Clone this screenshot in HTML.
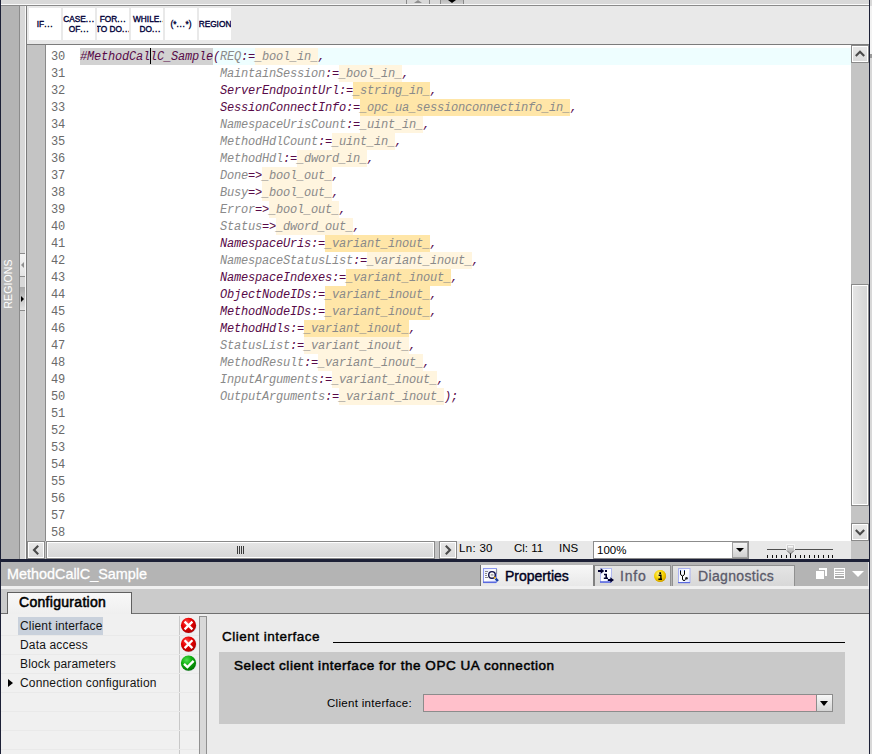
<!DOCTYPE html>
<html><head><meta charset="utf-8">
<style>
*{margin:0;padding:0;box-sizing:border-box}
html,body{width:872px;height:754px;overflow:hidden;background:#e8e8e8;font-family:"Liberation Sans",sans-serif}
.a{position:absolute}
/* code */
.ln,.num{position:absolute;height:17px;line-height:19px;font-family:"Liberation Mono",monospace;font-size:12px;letter-spacing:-0.2px;white-space:pre}
.ln>span{position:relative}
.num{left:51px;color:#6a6a6a}
.ln{left:80px;font-style:italic}
.p{color:#580a48}
.g{color:#8a8a8a}
.hs,.hf,.sel{display:inline-block;height:17px;vertical-align:top}
.hs{background:#ffe6a8;color:#8a8a8a}
.hf{background:#fff5df;color:#8a8a8a}
.sel{background:#d2d2d2;color:#580a48}
.tb b{font-weight:normal;letter-spacing:0.7px}
.btn{position:absolute;border:1px solid #8a8a8a;box-shadow:inset 0 0 0 1px #fff;background:linear-gradient(#e8e8e8,#dadada)}
.tb{position:absolute;top:8px;width:32px;height:32px;background:#fff;font-size:8.3px;color:#000038;-webkit-text-stroke:0.35px #000038;overflow:hidden;text-align:center;display:flex;align-items:center;justify-content:center;line-height:10px;letter-spacing:0px;white-space:nowrap}
.row{position:absolute;left:1px;width:178px;height:19px;border-bottom:1px solid #f8f8f8}
.li{position:absolute;left:20px;font-size:12px;color:#141414;line-height:14px;letter-spacing:0.16px}
</style></head><body>
<!-- left dark edge -->
<div class="a" style="left:0;top:0;width:1px;height:754px;background:#1c2036"></div>
<!-- top strip -->
<div class="a" style="left:1px;top:0;width:871px;height:4px;background:#d9d9d9"></div>
<div class="a" style="left:1px;top:4px;width:871px;height:1px;background:#fafafa"></div>
<div class="a" style="left:1px;top:5px;width:871px;height:1px;background:#8a8a8a"></div>
<div class="a" style="left:406px;top:0;width:1px;height:4px;background:#8a8a8a"></div>
<div class="a" style="left:429px;top:0;width:1px;height:4px;background:#8a8a8a"></div>
<div class="a" style="left:440px;top:0;width:1px;height:4px;background:#8a8a8a"></div>
<div class="a" style="left:463px;top:0;width:1px;height:4px;background:#8a8a8a"></div>
<div class="a" style="left:441px;top:0;width:22px;height:4px;background:linear-gradient(#bcbcbc,#d0d0d0)"></div>
<div class="a" style="left:414px;top:0;width:0;height:0;border-left:4px solid transparent;border-right:4px solid transparent;border-bottom:3px solid #909090"></div>
<div class="a" style="left:448px;top:0;width:0;height:0;border-left:4px solid transparent;border-right:4px solid transparent;border-top:3px solid #000"></div>

<!-- left sidebar -->
<div class="a" style="left:1px;top:6px;width:18px;height:553px;background:#b4b4b4"></div>
<div class="a" style="left:19px;top:6px;width:1px;height:553px;background:#8c8c8c"></div>
<div class="a" style="left:20px;top:6px;width:5px;height:553px;background:#d8d8d8"></div>
<div class="a" style="left:25px;top:6px;width:1px;height:553px;background:#f8f8f8"></div>
<div class="a" style="left:26px;top:6px;width:1px;height:553px;background:#7c7c7c"></div>
<div class="a" style="left:-18px;top:277px;width:52px;height:14px;transform:rotate(-90deg);color:#fff;font-size:10.5px;line-height:14px;text-align:center;letter-spacing:0.1px">REGIONS</div>
<!-- strip segments -->
<div class="a" style="left:20px;top:253px;width:5px;height:1px;background:#8c8c8c"></div>
<div class="a" style="left:20px;top:254px;width:5px;height:22px;background:linear-gradient(#f4f4f4,#e4e4e4)"></div>
<div class="a" style="left:21px;top:262px;width:0;height:0;border-top:3px solid transparent;border-bottom:3px solid transparent;border-right:3px solid #909090"></div>
<div class="a" style="left:20px;top:276px;width:5px;height:1px;background:#8c8c8c"></div>
<div class="a" style="left:20px;top:287px;width:5px;height:23px;background:linear-gradient(#a8a8a8,#e4e4e4)"></div>
<div class="a" style="left:21px;top:296px;width:0;height:0;border-top:3.5px solid transparent;border-bottom:3.5px solid transparent;border-left:3px solid #000"></div>
<div class="a" style="left:20px;top:310px;width:5px;height:1px;background:#8c8c8c"></div>

<!-- toolbar -->
<div class="a" style="left:27px;top:6px;width:842px;height:38px;background:#e9e9e9"></div>
<div class="a" style="left:27px;top:44px;width:842px;height:1px;background:#7c7c7c"></div>
<div class="tb" style="left:29px"><div>IF<b>...</b></div></div>
<div class="tb" style="left:63px"><div>CASE<b>...</b><br>OF<b>...</b></div></div>
<div class="tb" style="left:97px"><div>FOR<b>...</b><br>TO DO<b>..</b>.</div></div>
<div class="tb" style="left:131px;justify-content:flex-start;padding-left:2px"><div>WHILE<b>..</b><br>&nbsp;DO<b>...</b></div></div>
<div class="tb" style="left:165px"><div>(*<b>...</b>*)</div></div>
<div class="tb" style="left:199px"><div>REGION</div></div>

<!-- gutter & editor -->
<div class="a" style="left:27px;top:45px;width:18px;height:496px;background:#c4c4c4"></div>
<div class="a" style="left:45px;top:45px;width:1px;height:496px;background:#8a8a8a"></div>
<div class="a" style="left:46px;top:45px;width:805px;height:496px;background:#fff"></div>
<div class="a" style="left:213px;top:48px;width:638px;height:17px;background:#eefeff"></div>
<div class="num" style="top:48px">30</div>
<div class="num" style="top:65px">31</div>
<div class="num" style="top:82px">32</div>
<div class="num" style="top:99px">33</div>
<div class="num" style="top:116px">34</div>
<div class="num" style="top:133px">35</div>
<div class="num" style="top:150px">36</div>
<div class="num" style="top:167px">37</div>
<div class="num" style="top:184px">38</div>
<div class="num" style="top:201px">39</div>
<div class="num" style="top:218px">40</div>
<div class="num" style="top:235px">41</div>
<div class="num" style="top:252px">42</div>
<div class="num" style="top:269px">43</div>
<div class="num" style="top:286px">44</div>
<div class="num" style="top:303px">45</div>
<div class="num" style="top:320px">46</div>
<div class="num" style="top:337px">47</div>
<div class="num" style="top:354px">48</div>
<div class="num" style="top:371px">49</div>
<div class="num" style="top:388px">50</div>
<div class="num" style="top:405px">51</div>
<div class="num" style="top:422px">52</div>
<div class="num" style="top:439px">53</div>
<div class="num" style="top:456px">54</div>
<div class="num" style="top:473px">55</div>
<div class="num" style="top:490px">56</div>
<div class="num" style="top:507px">57</div>
<div class="num" style="top:524px">58</div>
<div class="ln" style="top:48px"><span class="sel">#MethodCallC_Sample</span><span class="p">(</span><span class="g">REQ</span><span class="p">:=</span><span class="hf">_bool_in_</span><span class="p">,</span></div>
<div class="ln" style="top:65px">                    <span class="g">MaintainSession</span><span class="p">:=</span><span class="hf">_bool_in_</span><span class="p">,</span></div>
<div class="ln" style="top:82px">                    <span class="p">ServerEndpointUrl</span><span class="p">:=</span><span class="hs">_string_in_</span><span class="p">,</span></div>
<div class="ln" style="top:99px">                    <span class="p">SessionConnectInfo</span><span class="p">:=</span><span class="hs">_opc_ua_sessionconnectinfo_in_</span><span class="p">,</span></div>
<div class="ln" style="top:116px">                    <span class="g">NamespaceUrisCount</span><span class="p">:=</span><span class="hf">_uint_in_</span><span class="p">,</span></div>
<div class="ln" style="top:133px">                    <span class="g">MethodHdlCount</span><span class="p">:=</span><span class="hf">_uint_in_</span><span class="p">,</span></div>
<div class="ln" style="top:150px">                    <span class="g">MethodHdl</span><span class="p">:=</span><span class="hf">_dword_in_</span><span class="p">,</span></div>
<div class="ln" style="top:167px">                    <span class="g">Done</span><span class="p">=></span><span class="hf">_bool_out_</span><span class="p">,</span></div>
<div class="ln" style="top:184px">                    <span class="g">Busy</span><span class="p">=></span><span class="hf">_bool_out_</span><span class="p">,</span></div>
<div class="ln" style="top:201px">                    <span class="g">Error</span><span class="p">=></span><span class="hf">_bool_out_</span><span class="p">,</span></div>
<div class="ln" style="top:218px">                    <span class="g">Status</span><span class="p">=></span><span class="hf">_dword_out_</span><span class="p">,</span></div>
<div class="ln" style="top:235px">                    <span class="p">NamespaceUris</span><span class="p">:=</span><span class="hs">_variant_inout_</span><span class="p">,</span></div>
<div class="ln" style="top:252px">                    <span class="g">NamespaceStatusList</span><span class="p">:=</span><span class="hf">_variant_inout_</span><span class="p">,</span></div>
<div class="ln" style="top:269px">                    <span class="p">NamespaceIndexes</span><span class="p">:=</span><span class="hs">_variant_inout_</span><span class="p">,</span></div>
<div class="ln" style="top:286px">                    <span class="p">ObjectNodeIDs</span><span class="p">:=</span><span class="hs">_variant_inout_</span><span class="p">,</span></div>
<div class="ln" style="top:303px">                    <span class="p">MethodNodeIDs</span><span class="p">:=</span><span class="hs">_variant_inout_</span><span class="p">,</span></div>
<div class="ln" style="top:320px">                    <span class="p">MethodHdls</span><span class="p">:=</span><span class="hs">_variant_inout_</span><span class="p">,</span></div>
<div class="ln" style="top:337px">                    <span class="g">StatusList</span><span class="p">:=</span><span class="hf">_variant_inout_</span><span class="p">,</span></div>
<div class="ln" style="top:354px">                    <span class="g">MethodResult</span><span class="p">:=</span><span class="hf">_variant_inout_</span><span class="p">,</span></div>
<div class="ln" style="top:371px">                    <span class="g">InputArguments</span><span class="p">:=</span><span class="hf">_variant_inout_</span><span class="p">,</span></div>
<div class="ln" style="top:388px">                    <span class="g">OutputArguments</span><span class="p">:=</span><span class="hf">_variant_inout_</span><span class="p">);</span></div>
<div class="a" style="left:150px;top:48px;width:1px;height:16px;background:#000"></div>

<!-- vertical scrollbar -->
<div class="a" style="left:851px;top:45px;width:18px;height:514px;background:#c4c4c4"></div>
<div class="btn" style="left:851px;top:45px;width:18px;height:18px"></div>
<svg class="a" style="left:851px;top:45px" width="18" height="18"><path d="M4.8 11 L9 6.8 L13.2 11" fill="none" stroke="#4a4a4a" stroke-width="2.1"/></svg>
<div class="btn" style="left:851px;top:284px;width:18px;height:222px;background:linear-gradient(90deg,#e6e6e6,#d4d4d4)"></div>
<div class="btn" style="left:851px;top:523px;width:18px;height:18px"></div>
<svg class="a" style="left:851px;top:523px" width="18" height="18"><path d="M4.8 7 L9 11.2 L13.2 7" fill="none" stroke="#4a4a4a" stroke-width="2.1"/></svg>
<!-- right edge -->
<div class="a" style="left:869px;top:0;width:1px;height:754px;background:#1c2036"></div>
<div class="a" style="left:870px;top:0;width:2px;height:754px;background:#d8d8d8"></div>
<div class="a" style="left:870px;top:6px;width:2px;height:48px;background:#f2f2f2"></div>
<div class="a" style="left:870px;top:54px;width:2px;height:4px;background:#9a9a9a"></div>

<!-- horizontal scrollbar / status bar -->
<div class="a" style="left:27px;top:541px;width:824px;height:18px;background:#e8e8e8"></div>
<div class="a" style="left:45px;top:541px;width:412px;height:18px;background:#c4c4c4"></div>
<div class="btn" style="left:27px;top:541px;width:18px;height:18px"></div>
<svg class="a" style="left:27px;top:541px" width="18" height="18"><path d="M11.2 4.8 L7 9 L11.2 13.2" fill="none" stroke="#4a4a4a" stroke-width="2.1"/></svg>
<div class="btn" style="left:46px;top:541px;width:389px;height:18px;background:linear-gradient(#e6e6e6,#d6d6d6)"></div>
<svg class="a" style="left:236px;top:545px" width="10" height="10"><path d="M1.5 1V9M3.5 1V9M5.5 1V9M7.5 1V9" stroke="#3a3a3a" stroke-width="1"/></svg>
<div class="btn" style="left:439px;top:541px;width:18px;height:18px"></div>
<svg class="a" style="left:439px;top:541px" width="18" height="18"><path d="M6.8 4.8 L11 9 L6.8 13.2" fill="none" stroke="#4a4a4a" stroke-width="2.1"/></svg>
<div class="a" style="left:459px;top:540px;height:17px;line-height:17px;font-size:11.5px;letter-spacing:0.3px;color:#000;white-space:pre">Ln: 30</div>
<div class="a" style="left:514px;top:540px;height:17px;line-height:17px;font-size:11.5px;color:#000;white-space:pre">Cl: 11</div>
<div class="a" style="left:559px;top:540px;height:17px;line-height:17px;font-size:11.5px;color:#000;white-space:pre">INS</div>
<div class="a" style="left:593px;top:541px;width:156px;height:18px;background:#fff;border:1px solid #8c8c8c"></div>
<div class="a" style="left:597px;top:542px;height:16px;line-height:16px;font-size:11.5px;color:#000">100%</div>
<div class="a" style="left:732px;top:542px;width:16px;height:16px;background:linear-gradient(#f4f4f4,#d0d0d0);border:1px solid #a0a0a0"></div>
<div class="a" style="left:736px;top:548px;width:0;height:0;border-left:4px solid transparent;border-right:4px solid transparent;border-top:4px solid #000"></div>
<div class="a" style="left:767px;top:549px;width:66px;height:1px;background:#505050"></div>
<svg class="a" style="left:760px;top:540px" width="80" height="19">
<path d="M7.5 15V18M12.5 15V18M16.5 15V18M21.5 15V18M26.5 15V18M30.5 15V18M35.5 15V18M40.5 15V18M44.5 15V18M49.5 15V18M54.5 15V18M58.5 15V18M63.5 15V18M68.5 15V18M72.5 15V18" stroke="#101010" stroke-width="1"/>
<defs><linearGradient id="th" x1="0" y1="0" x2="0" y2="1"><stop offset="0" stop-color="#d8d8d8"/><stop offset="1" stop-color="#b0b0b0"/></linearGradient></defs>
<path d="M26.5 4.5H34.5V10L30.5 14L26.5 10Z" fill="url(#th)" stroke="#f4f4f4" stroke-width="1"/>
<rect x="28" y="6" width="5" height="1.6" fill="#f8f8f8"/>
<path d="M27 10.5L30.5 14L34 10.5" fill="none" stroke="#505050" stroke-width="0.9"/>
<path d="M30.5 13.5V18" stroke="#101010" stroke-width="1"/>
</svg>

<!-- separator -->
<div class="a" style="left:1px;top:559px;width:868px;height:3px;background:#1c2036"></div>

<!-- panel header -->
<div class="a" style="left:1px;top:562px;width:867px;height:24px;background:#b4b4b4"></div>
<div class="a" style="left:7px;top:562px;height:24px;line-height:24px;font-size:14.4px;color:#fff;-webkit-text-stroke:0.3px #fff">MethodCallC_Sample</div>
<!-- tabs -->
<div class="a" style="left:480px;top:565px;width:113px;height:21px;background:linear-gradient(#f8f8f8,#e8e8e8);border-left:1px solid #707070"></div>
<div class="a" style="left:505px;top:566px;height:21px;line-height:21px;font-size:14px;color:#000020;-webkit-text-stroke:0.4px #000020">Properties</div>
<div class="a" style="left:593px;top:565px;width:78px;height:21px;background:linear-gradient(#e4e4e4,#d8d8d8);border-left:2px solid #808080;border-top:1px solid #909090;border-right:1px solid #909090"></div>
<div class="a" style="left:620px;top:566px;height:21px;line-height:21px;font-size:14px;letter-spacing:0.8px;color:#5a5a6a;-webkit-text-stroke:0.3px #5a5a6a">Info</div>
<div class="a" style="left:654px;top:570px;width:12px;height:12px;border-radius:50%;background:radial-gradient(circle at 40% 35%,#fff8a0,#f0c800 60%,#c89a00);text-align:center;font:bold 10px/12px 'Liberation Serif',serif;color:#000">i</div>
<div class="a" style="left:672px;top:565px;width:123px;height:21px;background:linear-gradient(#e4e4e4,#d8d8d8);border-left:1px solid #909090;border-top:1px solid #909090;border-right:1px solid #909090"></div>
<div class="a" style="left:698px;top:566px;height:21px;line-height:21px;font-size:14px;letter-spacing:0.35px;color:#5a5a6a;-webkit-text-stroke:0.3px #5a5a6a">Diagnostics</div>

<!-- tab icons -->
<svg class="a" style="left:480px;top:565px" width="22" height="22">
<defs>
<linearGradient id="doc" x1="0" y1="0" x2="1" y2="1"><stop offset="0" stop-color="#e4e8ff"/><stop offset="0.5" stop-color="#ffffff"/><stop offset="1" stop-color="#dce2ff"/></linearGradient>
</defs>
<rect x="3.5" y="3.5" width="13" height="14" fill="url(#doc)" stroke="#8c98f0" stroke-width="1"/>
<rect x="3" y="16.5" width="13" height="1.6" fill="#5a6ae0"/>
<path d="M16.5 4V9" stroke="#8890a8" stroke-width="1.2"/>
<path d="M5 6.5H8M5 8.5H7M5 10.5H7M5 12.5H8" stroke="#8a8a8a" stroke-width="1"/>
<circle cx="12" cy="9.9" r="3.3" fill="#f4f4f4" stroke="#10104a" stroke-width="1.4"/>
<rect x="10.8" y="9.2" width="2.6" height="1.4" fill="#a0a0a0"/>
<path d="M14.2 12.2L15.4 13.4" stroke="#f0b000" stroke-width="1.8"/>
<path d="M15.6 13.6L18 16" stroke="#1a40a0" stroke-width="2.4"/>
</svg>
<svg class="a" style="left:596px;top:565px" width="20" height="20">
<rect x="4.5" y="3.5" width="11" height="14" fill="url(#doc)" stroke="#b0b8f0" stroke-width="1"/>
<rect x="4" y="16.2" width="10.5" height="1.6" fill="#5a6ae0"/>
<path d="M2 6H6" stroke="#000030" stroke-width="2"/><path d="M4.8 3.2L8.3 6L4.8 8.8Z" fill="#000030"/>
<rect x="9" y="5" width="2" height="2" fill="#000030"/>
<path d="M8 9.5H10.2V13.3M7.8 13.3H12" fill="none" stroke="#000030" stroke-width="1.6"/>
<path d="M11.8 15H15" stroke="#000030" stroke-width="2"/><path d="M14.3 12.2L18 15L14.3 17.8Z" fill="#000030"/>
</svg>
<svg class="a" style="left:654px;top:570px" width="13" height="13">
<defs><radialGradient id="yg" cx="40%" cy="35%" r="65%"><stop offset="0" stop-color="#fff690"/><stop offset="0.55" stop-color="#f8d400"/><stop offset="1" stop-color="#d0a000"/></radialGradient></defs>
<circle cx="6.2" cy="6" r="5.9" fill="url(#yg)"/>
<rect x="5.3" y="2.3" width="1.8" height="1.7" fill="#000"/>
<path d="M4.6 5.2H6.9V9M4.4 9.3H8" fill="none" stroke="#000" stroke-width="1.4"/>
</svg>
<svg class="a" style="left:677px;top:567px" width="14" height="17">
<rect x="1.5" y="1.5" width="11.5" height="14" fill="url(#doc)" stroke="#a8b0f0" stroke-width="1"/>
<rect x="1" y="15" width="12" height="1.2" fill="#5a6ae0"/>
<path d="M3.5 3.2V7Q3.5 8.3 5.5 9Q7.5 8.3 7.5 7V3.2" fill="none" stroke="#000" stroke-width="1"/>
<path d="M3 3.5H4M7 3.5H8" stroke="#2040a0" stroke-width="1"/>
<path d="M5.5 9V12Q5.5 13.5 7 13.5Q8.3 13.5 8.8 12.3" fill="none" stroke="#000" stroke-width="1"/>
<circle cx="9.5" cy="11.3" r="1.3" fill="#202020"/>
</svg>
<!-- header icons -->
<div class="a" style="left:819px;top:568px;width:8px;height:8px;background:#fff"></div>
<div class="a" style="left:815px;top:570px;width:10px;height:10px;background:#fff;border:1px solid #b4b4b4"></div>
<div class="a" style="left:834px;top:568px;width:11px;height:11px;border:1px solid #fff;background:linear-gradient(#c8c8c8 0 2px,#fff 2px 3px,#b4b4b4 3px 4px,#fff 4px 5px,#b4b4b4 5px 6px,#fff 6px 7px,#a8a8a8 7px)"></div>
<div class="a" style="left:852px;top:571px;width:0;height:0;border-left:6px solid transparent;border-right:6px solid transparent;border-top:6px solid #fff"></div>

<!-- below header strip -->
<div class="a" style="left:1px;top:586px;width:868px;height:3px;background:#f0f0f0"></div>
<div class="a" style="left:1px;top:589px;width:868px;height:25px;background:#cbcbcb"></div>
<div class="a" style="left:1px;top:613px;width:868px;height:1px;background:#707070"></div>
<div class="a" style="left:7px;top:592px;width:125px;height:22px;background:linear-gradient(#f8f8f8,#efefef);border:1px solid #606060;border-bottom:none"></div>
<div class="a" style="left:19px;top:591px;height:22px;line-height:22px;font-size:14px;letter-spacing:0.3px;-webkit-text-stroke:0.55px #000;color:#000">Configuration</div>

<!-- content -->
<div class="a" style="left:1px;top:614px;width:867px;height:140px;background:#f0f0f0"></div>
<div class="a" style="left:207px;top:614px;width:661px;height:140px;background:#ebebeb"></div>
<div class="a" style="left:179px;top:616px;width:1px;height:138px;background:#c8c8c8"></div>
<div class="a" style="left:199px;top:616px;width:8px;height:138px;background:#d8d8d8;border:1px solid #909090;border-bottom:none"></div>
<div class="a" style="left:18px;top:617px;width:85px;height:18px;background:#c9d1dc"></div>
<div class="a" style="left:1px;top:635px;width:198px;height:1px;background:#e9e9e9"></div>
<div class="a" style="left:1px;top:654px;width:198px;height:1px;background:#e9e9e9"></div>
<div class="a" style="left:1px;top:673px;width:198px;height:1px;background:#e9e9e9"></div>
<div class="a" style="left:1px;top:692px;width:198px;height:1px;background:#e9e9e9"></div>
<div class="a" style="left:1px;top:711px;width:198px;height:1px;background:#e9e9e9"></div>
<div class="a" style="left:1px;top:730px;width:198px;height:1px;background:#e9e9e9"></div>
<div class="a" style="left:1px;top:749px;width:198px;height:1px;background:#e9e9e9"></div>
<div class="a li" style="top:619px">Client interface</div>
<div class="a li" style="top:638px">Data access</div>
<div class="a li" style="top:657px">Block parameters</div>
<div class="a li" style="top:676px">Connection configuration</div>
<div class="a" style="left:8px;top:679px;width:0;height:0;border-top:4px solid transparent;border-bottom:4px solid transparent;border-left:5px solid #000"></div>
<!-- status icons -->
<svg class="a" style="left:180px;top:617px" width="19" height="56">
<defs>
<radialGradient id="rg" cx="38%" cy="30%" r="75%"><stop offset="0" stop-color="#ff4a4a"/><stop offset="0.45" stop-color="#e80000"/><stop offset="1" stop-color="#a80000"/></radialGradient>
<radialGradient id="gg" cx="38%" cy="30%" r="75%"><stop offset="0" stop-color="#50e050"/><stop offset="0.45" stop-color="#10b010"/><stop offset="1" stop-color="#007000"/></radialGradient>
</defs>
<circle cx="9" cy="9" r="7.6" fill="#b8c0d8" opacity="0.5"/>
<circle cx="8.5" cy="8.4" r="7.6" fill="url(#rg)"/>
<path d="M4.6 4.6L12.4 12.4M12.4 4.6L4.6 12.4" stroke="#fff" stroke-width="2.3"/>
<circle cx="9" cy="27.6" r="7.6" fill="#b8c0d8" opacity="0.5"/>
<circle cx="8.5" cy="27.1" r="7.6" fill="url(#rg)"/>
<path d="M4.6 23.3L12.4 31.1M12.4 23.3L4.6 31.1" stroke="#fff" stroke-width="2.3"/>
<circle cx="9" cy="46.6" r="7.6" fill="#b8c0d8" opacity="0.5"/>
<circle cx="8.5" cy="46.1" r="7.6" fill="url(#gg)"/>
<path d="M4 46.8L7.4 50L13.6 43.8" fill="none" stroke="#fff" stroke-width="2.4"/>
</svg>

<div class="a" style="left:222px;top:629px;height:16px;line-height:16px;font-size:13.5px;letter-spacing:0.5px;-webkit-text-stroke:0.4px #000;color:#000">Client interface</div>
<div class="a" style="left:333px;top:642px;width:512px;height:1px;background:#000"></div>
<div class="a" style="left:219px;top:652px;width:626px;height:72px;background:#c9c9c9"></div>
<div class="a" style="left:234px;top:658px;height:16px;line-height:16px;font-size:13.5px;letter-spacing:0.54px;-webkit-text-stroke:0.5px #000;color:#000">Select client interface for the OPC UA connection</div>
<div class="a" style="left:327px;top:695px;height:16px;line-height:16px;font-size:11.5px;letter-spacing:0.3px;color:#000">Client interface:</div>
<div class="a" style="left:423px;top:694px;width:394px;height:18px;background:#ffc0cb;border:1px solid #8c8c8c"></div>
<div class="a" style="left:816px;top:694px;width:17px;height:18px;background:linear-gradient(#f8f8f8,#d4d4d4);border:1px solid #8c8c8c"></div>
<div class="a" style="left:820px;top:701px;width:0;height:0;border-left:4.5px solid transparent;border-right:4.5px solid transparent;border-top:5px solid #000"></div>
</body></html>
